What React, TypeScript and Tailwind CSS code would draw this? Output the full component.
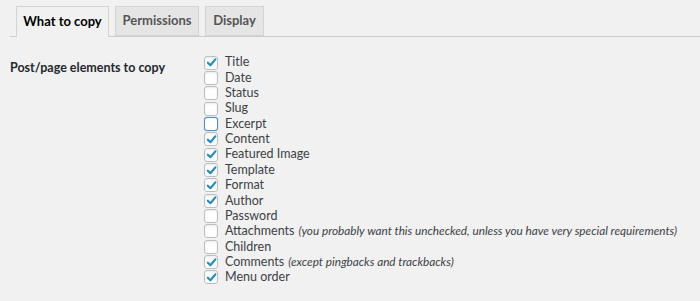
import React from "react";

const items: { label: string; note?: string; checked: boolean; focus?: boolean }[] = [
  { label: "Title", checked: true },
  { label: "Date", checked: false },
  { label: "Status", checked: false },
  { label: "Slug", checked: false },
  { label: "Excerpt", checked: false, focus: true },
  { label: "Content", checked: true },
  { label: "Featured Image", checked: true },
  { label: "Template", checked: true },
  { label: "Format", checked: true },
  { label: "Author", checked: true },
  { label: "Password", checked: false },
  {
    label: "Attachments",
    note: "(you probably want this unchecked, unless you have very special requirements)",
    checked: false,
  },
  { label: "Children", checked: false },
  { label: "Comments", note: "(except pingbacks and trackbacks)", checked: true },
  { label: "Menu order", checked: true },
];

function Box({ checked, focus }: { checked: boolean; focus?: boolean }) {
  return (
    <span
      className={
        "flex h-[14px] w-[14px] shrink-0 items-center justify-center rounded-[3px] bg-[#fefefe] " +
        (focus
          ? "border-[1.5px] border-[#4a8fc9] shadow-[0_0_1px_#5b9dd9]"
          : "border border-[#b9bec3] shadow-[inset_0_1px_2px_rgba(0,0,0,0.08)]")
      }
    >
      {checked && (
        <svg width="11" height="11" viewBox="0 0 12 12">
          <path d="M2 6.2 L4.8 9 L10.2 2.6" fill="none" stroke="#1e8cbe" strokeWidth="2.3" strokeLinecap="round" strokeLinejoin="round" />
        </svg>
      )}
    </span>
  );
}

export default function App() {
  return (
    <div className="h-[301px] w-[700px] overflow-hidden bg-[#f1f1f1] px-[10px] text-[13px] text-[#23282d]" style={{ fontFamily: 'Lato, "Liberation Sans", sans-serif' }}>
      {/* Tabs */}
      <div className="-mr-[10px] flex gap-[6px] border-b border-[#cccccc] pl-[6px] pt-[6px]">
        <div className="-mb-px flex h-[31px] w-[93px] items-center justify-center border border-b-0 border-[#d4d4d4] bg-[#f1f1f1] text-[13px] font-bold text-black">
          What to copy
        </div>
        <div className="flex h-[30px] w-[84px] items-center justify-center border border-[#d4d4d4] bg-[#e5e5e5] text-[13px] font-bold text-[#555555]">
          Permissions
        </div>
        <div className="flex h-[30px] w-[59px] items-center justify-center border border-[#d4d4d4] bg-[#e5e5e5] text-[13px] font-bold text-[#555555]">
          Display
        </div>
      </div>

      {/* Settings row */}
      <div className="flex pt-[18px]">
        <div className="w-[194px] shrink-0 pt-[4px] text-[12.5px] font-bold text-[#23282d]">Post/page elements to copy</div>
        <div className="flex flex-col">
          {items.map((it) => (
            <label key={it.label} className="flex h-[15.35px] items-center gap-[7px] text-[12.5px] text-[#3c4146]">
              <Box checked={it.checked} focus={it.focus} />
              <span className="whitespace-nowrap leading-none">
                {it.label}
                {it.note && <i className="ml-[4px] text-[11.75px]">{it.note}</i>}
              </span>
            </label>
          ))}
        </div>
      </div>
    </div>
  );
}
